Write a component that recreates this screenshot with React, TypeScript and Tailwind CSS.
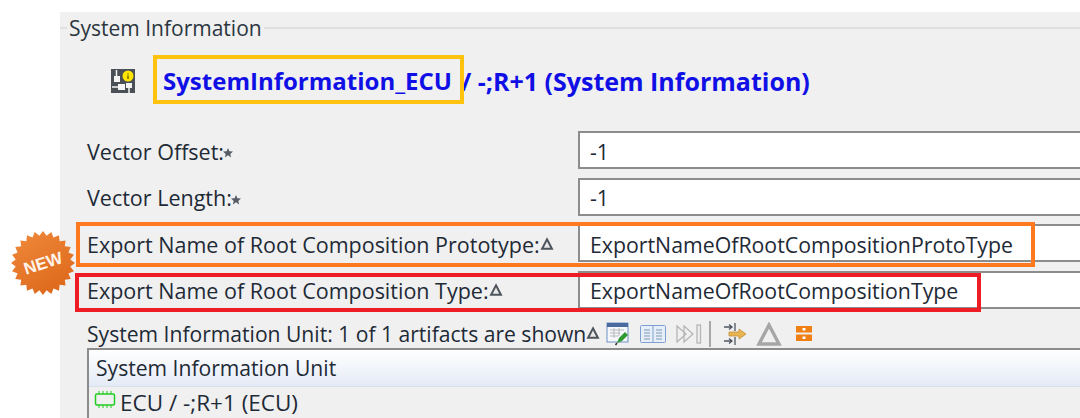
const font = { fontFamily: '"Open Sans", "Noto Sans", sans-serif' };

function Star() {
  return (
    <svg width="12" height="12" viewBox="0 0 12 12" className="-ml-[2px] mt-[3px] shrink-0">
      <path d="M6 1l1.400 3.300 3.600.3-2.700 2.300.8 3.500L6 8.300 2.900 10.400l.8-3.500L1 4.600l3.600-.3z" fill="#555c63" />
    </svg>
  );
}

function Delta() {
  return (
    <svg width="14" height="14" viewBox="0 0 12 12" className="shrink-0 mb-[2px]">
      <path d="M6 2l4.200 8H1.800z" fill="#e8e8e8" stroke="#4d545b" strokeWidth="1.700" />
    </svg>
  );
}

function SystemIcon() {
  return (
    <svg width="24" height="24" viewBox="0 0 24 24" className="shrink-0 ml-[1px]">
      <rect width="24" height="24" fill="#4a5056" />
      <path d="M5.500 1v8M1 18h12M18 24v-10" stroke="#f4f4f4" strokeWidth="1.500" />
      <rect x="3" y="7" width="6" height="6" fill="#f4f4f4" />
      <rect x="7" y="15" width="7" height="6" fill="#f4f4f4" />
      <rect x="15" y="14" width="6" height="5" fill="#f4f4f4" />
      <circle cx="17" cy="7" r="5.500" fill="#ffe600" />
      <path d="M17 4.500v1M17 6.500v3.500" stroke="#6b6200" strokeWidth="1.400" />
    </svg>
  );
}

function NewBadge() {
  const points: string[] = [];
  const teeth = 24;
  for (let i = 0; i < teeth * 2; i++) {
    const r = i % 2 === 0 ? 32 : 27.5;
    const a = (Math.PI * i) / teeth;
    points.push(`${(33 + r * Math.cos(a)).toFixed(1)},${(33 + r * Math.sin(a)).toFixed(1)}`);
  }
  return (
    <svg width="66" height="66" viewBox="0 0 66 66" className="absolute left-[10px] top-[230px]">
      <defs>
        <linearGradient id="badge" x1="0" y1="0" x2="0.6" y2="1">
          <stop offset="0" stopColor="#f08a3c" />
          <stop offset="1" stopColor="#de6a1c" />
        </linearGradient>
      </defs>
      <polygon points={points.join(' ')} fill="url(#badge)" />
      <text
        x="33"
        y="39"
        textAnchor="middle"
        transform="rotate(-18 33 33)"
        fill="#fdf3ea"
        fontSize="17"
        fontWeight="700"
        fontFamily='"Liberation Sans", sans-serif'
      >
        NEW
      </text>
    </svg>
  );
}

function FieldRow({ label, value, mark }: { label: string; value: string; mark: 'star' | 'delta' }) {
  return (
    <div className="flex items-center">
      <div className="w-[518px] pl-[27px] pt-[3px] flex items-center shrink-0 text-[#1e2a36] text-[21.5px]">
        <span>{label}</span>
        {mark === 'star' ? <Star /> : <Delta />}
      </div>
      <div className="flex-1 h-[38px] bg-white border-2 border-[#8c8c8c] border-r-0 pl-[10px] pt-[3px] flex items-center text-[#1e2a36]">
        {value}
      </div>
    </div>
  );
}

function Toolbar() {
  return (
    <div className="flex items-center">
      <svg width="24" height="26" viewBox="0 0 24 24" className="ml-[6px]">
        <rect x="1" y="1" width="21" height="19" fill="#f5f7fb" stroke="#6d8fc4" />
        <rect x="1" y="1" width="21" height="4" fill="#49699f" />
        <path d="M4 8h14M4 11h10M4 14h8M8 6v10M13 6v8" stroke="#b9b9b9" strokeWidth="1" />
        <path d="M11 21l2-5 6-6 3 3-6 6z" fill="#2f9a32" />
        <path d="M9.500 23l1.500-2" stroke="#333" strokeWidth="1.500" />
      </svg>
      <svg width="26" height="18" viewBox="0 0 26 18" className="ml-[10px]">
        <rect x="0.500" y="0.500" width="25" height="17" rx="1" fill="#e6eef9" stroke="#7e9fd0" />
        <path d="M13 1v16" stroke="#7e9fd0" />
        <path d="M4 5h6M4 8h6M4 11h6M4 14h6M16 5h6M16 8h6M16 11h6M16 14h6" stroke="#7f97b8" strokeWidth="1.200" />
      </svg>
      <svg width="26" height="20" viewBox="0 0 26 20" className="ml-[10px]" fill="none" stroke="#b5b5b5" strokeWidth="1.300">
        <path d="M1 2l9 8-9 8zM8 2l9 8-9 8z" />
        <rect x="21" y="1" width="3.500" height="18" />
      </svg>
      <div className="w-[2px] h-[26px] bg-[#a8a8a8] ml-[7px]" />
      <svg width="24" height="22" viewBox="0 0 24 22" className="ml-[13px]" fill="none">
        <path d="M0 4h7M5 1.500L8 4 5 6.500M11 0v8M0 18h7M5 15.500L8 18 5 20.500M11 14v8" stroke="#4d5560" strokeWidth="1.300" />
        <path d="M5 9h10V6l7 5-7 5v-3H5z" fill="#e8b552" stroke="#c08f30" strokeWidth="0.800" />
      </svg>
      <svg width="26" height="24" viewBox="0 0 26 24" className="ml-[8px]">
        <path d="M13 3l10 19H3z" fill="none" stroke="#a6a6a6" strokeWidth="3.400" />
      </svg>
      <svg width="16" height="15" viewBox="0 0 16 15" className="ml-[14px]">
        <rect width="16" height="6.500" fill="#f07f14" />
        <rect y="8.500" width="16" height="6.500" fill="#f07f14" />
        <rect x="6.500" y="2" width="3" height="2.500" fill="#fff" />
        <rect x="6.500" y="10.500" width="3" height="2.500" fill="#fff" />
      </svg>
    </div>
  );
}

export default function App() {
  return (
    <div className="relative w-[1080px] h-[418px] bg-white overflow-hidden pl-[60px] pt-[12px] text-[21.3px] leading-[28px]" style={font}>
      <div className="h-[406px] bg-[#f0f0f0] pt-[2px]">
        <div className="flex items-center text-[21px]">
          <div className="w-[7px] h-[2px] bg-[#e0e0e0] shrink-0" />
          <span className="px-[2px] text-[#2b3640]">System Information</span>
          <div className="flex-1 h-[2px] bg-[#e0e0e0]" />
        </div>

        <div className="flex items-center h-[32px] mt-[23px] pl-[50px] font-bold text-[#0f0fe6]">
          <SystemIcon />
          <span className="ml-[28px] text-[24px]">SystemInformation_ECU</span>
          <span className="ml-[9px] text-[25px]">/ -;R+1 (System Information)</span>
        </div>

        <div className="mt-[34px] flex flex-col gap-[8.5px]">
          <FieldRow label="Vector Offset:" value="-1" mark="star" />
          <FieldRow label="Vector Length:" value="-1" mark="star" />
          <FieldRow label="Export Name of Root Composition Prototype:" value="ExportNameOfRootCompositionProtoType" mark="delta" />
          <FieldRow label="Export Name of Root Composition Type:" value="ExportNameOfRootCompositionType" mark="delta" />
        </div>

        <div className="flex items-center h-[28px] mt-[11px] pl-[27px] text-[#1e2a36] text-[21.1px]">
          <span>System Information Unit: 1 of 1 artifacts are shown</span>
          <Delta />
          <Toolbar />
        </div>

        <div className="ml-[27px] border-l-2 border-t-2 border-[#8c8c8c] h-[70px]">
          <div className="h-[37px] pl-[7px] pt-[1px] flex items-center text-[#1e2a36] text-[21.1px] bg-gradient-to-b from-white to-[#e4ebf6] border-b border-[#d8e0ec]">
            System Information Unit
          </div>
          <div className="flex items-center h-[33px] pl-[5px] text-[#1e2a36] text-[22.5px]">
            <svg width="22" height="20" viewBox="0 0 22 20" className="shrink-0 -mt-[6px]" fill="none" stroke="#22cc22" strokeWidth="1.500">
              <rect x="1.500" y="4" width="19" height="11" rx="1.500" />
              <path d="M5 1v3M9 1v3M13 1v3M17 1v3M5 15v3M9 15v3M13 15v3M17 15v3" strokeWidth="1" />
            </svg>
            <span className="ml-[4px]">ECU / -;R+1 (ECU)</span>
          </div>
        </div>
      </div>

      <div className="absolute left-[153px] top-[55px] w-[311px] h-[49px] border-[4px] border-[#ffc20e]" />
      <div className="absolute left-[76px] top-[222px] w-[959px] h-[45px] border-[4px] border-[#ff7a1f]" />
      <div className="absolute left-[75px] top-[273px] w-[906px] h-[39px] border-[4px] border-[#ee1c25]" />
      <NewBadge />
    </div>
  );
}
